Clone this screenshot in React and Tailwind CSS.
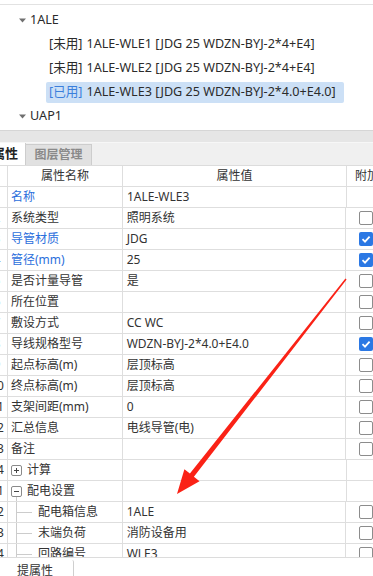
import React from 'react';

const FONT = "font-['Noto_Sans','Noto_Sans_CJK_SC',sans-serif]";

const treeItems = [
  { tag: '未用', text: '1ALE-WLE1 [JDG 25 WDZN-BYJ-2*4+E4]' },
  { tag: '未用', text: '1ALE-WLE2 [JDG 25 WDZN-BYJ-2*4+E4]' },
  { tag: '已用', text: '1ALE-WLE3 [JDG 25 WDZN-BYJ-2*4.0+E4.0]', selected: true },
];

// kind: plain | plus | minus | child
const rows = [
  { n: 1, name: '名称', value: '1ALE-WLE3', blue: true, check: null },
  { n: 2, name: '系统类型', value: '照明系统', check: false },
  { n: 3, name: '导管材质', value: 'JDG', blue: true, check: true },
  { n: 4, name: '管径(mm)', value: '25', blue: true, check: true },
  { n: 5, name: '是否计量导管', value: '是', check: false },
  { n: 6, name: '所在位置', value: '', check: false },
  { n: 7, name: '敷设方式', value: 'CC WC', check: false },
  { n: 8, name: '导线规格型号', value: 'WDZN-BYJ-2*4.0+E4.0', check: true },
  { n: 9, name: '起点标高(m)', value: '层顶标高', check: false },
  { n: 10, name: '终点标高(m)', value: '层顶标高', check: false },
  { n: 11, name: '支架间距(mm)', value: '0', check: false },
  { n: 12, name: '汇总信息', value: '电线导管(电)', check: false },
  { n: 13, name: '备注', value: '', check: false },
  { n: 14, name: '计算', value: '', check: null, kind: 'plus' },
  { n: 21, name: '配电设置', value: '', check: null, kind: 'minus' },
  { n: 22, name: '配电箱信息', value: '1ALE', check: false, kind: 'child' },
  { n: 23, name: '末端负荷', value: '消防设备用', check: false, kind: 'child' },
  { n: 24, name: '回路编号', value: 'WLE3', check: false, kind: 'child' },
];

function Caret() {
  return (
    <svg width="7" height="5" viewBox="0 0 7 5">
      <path d="M0 0.5 L7 0.5 L3.5 4.5 Z" fill="#707070" />
    </svg>
  );
}

function Checkbox({ checked }) {
  if (checked) {
    return (
      <div className="w-[14px] h-[14px] rounded-[2px] bg-[#2b78e4] flex items-center justify-center">
        <svg width="10" height="10" viewBox="0 0 10 10">
          <path d="M1.5 5.2 L4 7.6 L8.6 2.6" stroke="white" strokeWidth="1.8" fill="none" />
        </svg>
      </div>
    );
  }
  return <div className="w-[14px] h-[14px] rounded-[2px] border border-[#8c8c8c] bg-white" />;
}

function ToggleBox({ plus }) {
  return (
    <div className="w-[11px] h-[11px] rounded-[2px] border border-[#8a8a8a] bg-white flex items-center justify-center">
      <svg width="9" height="9" viewBox="0 0 9 9">
        <path d="M2 4.5 L7 4.5" stroke="#444" strokeWidth="1" />
        {plus && <path d="M4.5 2 L4.5 7" stroke="#444" strokeWidth="1" />}
      </svg>
    </div>
  );
}

function NameCell({ row }) {
  const color = row.blue ? 'text-[#2c6fdc]' : 'text-[#333]';
  if (row.kind === 'plus' || row.kind === 'minus') {
    return (
      <div className="flex items-stretch h-full">
        <div className="w-[11px] ml-[3px] flex flex-col items-center">
          <div className="flex-1" />
          <ToggleBox plus={row.kind === 'plus'} />
          <div className={row.kind === 'minus' ? 'flex-1 w-px bg-[#cccccc]' : 'flex-1'} />
        </div>
        <span className={`ml-[5px] self-center ${color}`}>{row.name}</span>
      </div>
    );
  }
  if (row.kind === 'child') {
    return (
      <div className="flex items-stretch h-full">
        <div className="w-[8px]" />
        <div className="w-[16px] border-l border-[#cccccc] flex items-center">
          <div className="h-px w-full bg-[#cccccc]" />
        </div>
        <span className={`ml-[6px] self-center ${color}`}>{row.name}</span>
      </div>
    );
  }
  return <div className={`pl-[3px] flex items-center h-full ${color}`}>{row.name}</div>;
}

function PropRow({ row }) {
  return (
    <div className="flex h-[21px] border-b border-[#dedede] text-[12px]">
      <div className="w-[8px] border-r border-[#dedede] overflow-hidden flex items-center">
        <div className="w-[14px] -ml-[10px] shrink-0 text-center text-[#333]">{row.n}</div>
      </div>
      <div className="w-[115px] border-r border-[#dedede] whitespace-nowrap overflow-hidden">
        <NameCell row={row} />
      </div>
      <div className="w-[224px] border-r border-[#dedede] pl-[4px] flex items-center text-[#333] whitespace-nowrap overflow-hidden">
        {row.value}
      </div>
      <div className="flex-1 pl-[13px] flex items-center">
        {row.check !== null && <Checkbox checked={row.check} />}
      </div>
    </div>
  );
}

function RedArrow() {
  return (
    <svg className="absolute left-0 top-0 pointer-events-none" width="373" height="576" viewBox="0 0 373 576">
      <polygon
        points="346.6,279.6 193.9,476.8 199.5,481.2 177,494 184.4,469.2 189.9,473.6 345.4,278.4"
        fill="#fa2216"
      />
    </svg>
  );
}

export default function App() {
  return (
    <div className={`relative w-[373px] h-[576px] overflow-hidden bg-white ${FONT}`}>
      {/* cut-off caption of the section above */}
      <div className="h-[4px] overflow-hidden border-b border-[#e2e2e2] box-content">
        <div className="-mt-[13px] pl-[2px] text-[12px] leading-[14px] text-[#c0c0c0]">线路信息列表</div>
      </div>

      {/* tree */}
      <div className="h-[122px] overflow-hidden border-b border-[#d6d6d6] box-content pt-[3px] text-[12.6px] text-[#2b2b2b]">
        <div className="h-[24px] flex items-center pl-[19px]">
          <Caret />
          <span className="ml-[4px]">1ALE</span>
        </div>
        {treeItems.map((it) => (
          <div key={it.text} className="h-[24px] flex items-center pl-[46px]">
            <div
              className={`h-[21px] w-[298px] px-[3px] flex items-center rounded-[2px] whitespace-nowrap ${
                it.selected ? 'bg-[#cce0f6]' : ''
              }`}
            >
              <span className={it.selected ? 'text-[#3b7fdc]' : ''}>[{it.tag}]</span>
              <span className="ml-[4px]">{it.text}</span>
            </div>
          </div>
        ))}
        <div className="h-[24px] flex items-center pl-[19px]">
          <Caret />
          <span className="ml-[4px]">UAP1</span>
        </div>
      </div>

      {/* splitter band */}
      <div className="h-[11px] bg-[#e6e6e6] border-b border-[#f7f7f7] box-content" />

      {/* tabs */}
      <div className="h-[22px] bg-[#f0f0f0] flex items-end">
        <div className="w-[26px] h-[22px] bg-white border-r border-[#cdcdcd] overflow-hidden flex items-center">
          <span className="-ml-[8px] shrink-0 whitespace-nowrap text-[13px] font-bold text-[#222]">属性</span>
        </div>
        <div className="w-[66px] h-[21px] bg-[#e1e1e1] border-r border-t border-[#cdcdcd] flex items-center justify-center text-[12px] font-bold text-[#8a8a8a]">
          图层管理
        </div>
      </div>

      {/* property grid */}
      <div className="h-[393px] overflow-hidden border-t border-b border-[#dcdcdc] box-border">
        <div className="flex h-[21px] border-b border-[#dedede] text-[12px] text-[#333]">
          <div className="w-[8px] border-r border-[#dedede]" />
          <div className="w-[115px] border-r border-[#dedede] flex items-center justify-center">属性名称</div>
          <div className="w-[224px] border-r border-[#dedede] flex items-center justify-center">属性值</div>
          <div className="flex-1 pl-[8px] flex items-center whitespace-nowrap overflow-hidden">附加</div>
        </div>
        {rows.map((r) => (
          <PropRow key={r.n} row={r} />
        ))}
      </div>

      {/* bottom tab */}
      <div className="h-[20px] flex">
        <div className="w-[74px] mt-[2px] border-r border-[#cfcfcf] rounded-tr-[2px] flex items-start pl-[17px] pt-[4px] text-[12px] leading-[14px] text-[#333] whitespace-nowrap">
          提属性
        </div>
      </div>

      <RedArrow />
    </div>
  );
}
